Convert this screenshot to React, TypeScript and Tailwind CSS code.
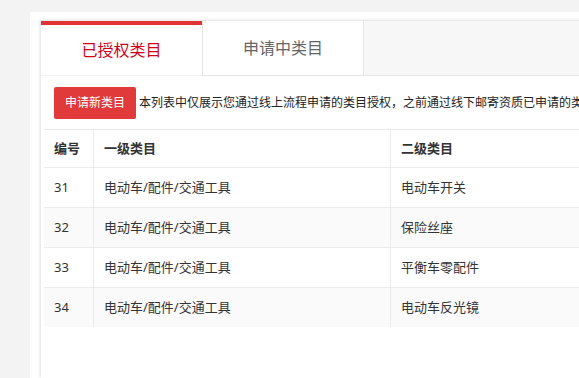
import React from 'react';

// 类目授权列表
const rows = [
  { id: 31, first: '电动车/配件/交通工具', second: '电动车开关' },
  { id: 32, first: '电动车/配件/交通工具', second: '保险丝座' },
  { id: 33, first: '电动车/配件/交通工具', second: '平衡车零配件' },
  { id: 34, first: '电动车/配件/交通工具', second: '电动车反光镜' },
];

const font = { fontFamily: '"Noto Sans", "Noto Sans CJK SC", sans-serif' };

export default function App() {
  return (
    <div className="w-[579px] h-[378px] overflow-hidden bg-[#f3f3f3] pl-[30px] pt-[12px]" style={font}>
      <div className="w-[1100px] h-full bg-white pl-[11px] pt-[8px] flex flex-col">
        <div className="flex-1 flex flex-col shadow-[-1px_0_3px_rgba(0,0,0,0.12)]">
          {/* Tabs */}
          <div className="flex h-[56px] bg-[#f7f7f7] border-t border-[#ebebeb]">
            <div className="w-[161px] bg-white border-t-4 border-b border-t-[#e03434] border-b-[#f2f2f2] flex items-center justify-center text-[16px] text-[#d0021b]">
              已授权类目
            </div>
            <div className="w-[162px] bg-white border-l border-r border-b border-[#e6e6e6] flex items-center justify-center text-[16px] text-[#666]">
              申请中类目
            </div>
            <div className="flex-1 border-b border-[#e6e6e6]" />
          </div>

          {/* Content */}
          <div className="flex-1 bg-white pl-[3px]">
            <div className="flex items-center pt-[11px] pl-[10px]">
              <button className="h-[32px] w-[82px] rounded-[2px] bg-[#e03a3a] text-white text-[12px]">
                申请新类目
              </button>
              <span className="ml-[3px] text-[12px] text-[#222] whitespace-nowrap">
                本列表中仅展示您通过线上流程申请的类目授权，之前通过线下邮寄资质已申请的类目将不在此列表中展示
              </span>
            </div>

            <div className="mt-[10px] text-[13px] text-[#333]">
              <div className="flex h-[38px] border-t border-[#ebebeb] font-bold bg-white">
                <div className="w-[49px] pl-[10px] flex items-center">编号</div>
                <div className="w-[297px] pl-[10px] flex items-center border-l border-[#ebebeb]">一级类目</div>
                <div className="flex-1 pl-[10px] flex items-center border-l border-[#ebebeb]">二级类目</div>
              </div>
              {rows.map((r, i) => (
                <div
                  key={r.id}
                  className={`flex h-[40px] border-t border-[#ebebeb] ${i % 2 === 1 ? 'bg-[#fafafa]' : 'bg-white'}`}
                >
                  <div className="w-[49px] pl-[10px] flex items-center">{r.id}</div>
                  <div className="w-[297px] pl-[10px] flex items-center border-l border-[#ebebeb]">{r.first}</div>
                  <div className="flex-1 pl-[10px] flex items-center border-l border-[#ebebeb]">{r.second}</div>
                </div>
              ))}
            </div>
          </div>
        </div>
      </div>
    </div>
  );
}
